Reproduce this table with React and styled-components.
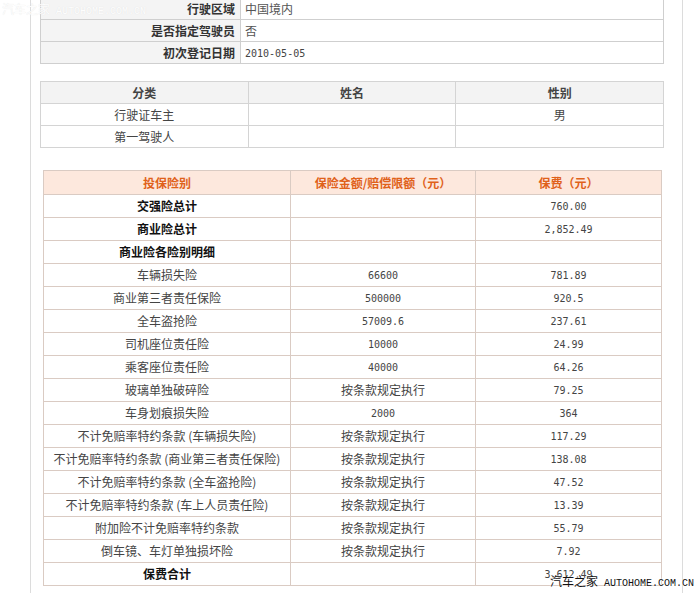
import React from "react";
import styled, { createGlobalStyle } from "styled-components";

const Global = createGlobalStyle`
  html, body { margin: 0; padding: 0; background: #fff; }
  body { font-family: "Noto Sans CJK SC", "Liberation Sans", sans-serif; font-size: 12px; color: #333; overflow: hidden; }
`;

const Page = styled.div`
  position: relative;
  width: 700px;
  height: 593px;
  overflow: hidden;
`;

const Frame = styled.div`
  margin: -3px 0 0 30px;
  width: 642px;
  border-left: 1px solid #dcdcdc;
  border-right: 1px solid #dcdcdc;
  padding: 0 0 20px 9px;
  display: flex;
  flex-direction: column;
`;

const Table = styled.table`
  border-collapse: collapse;
  width: ${(p) => p.$w}px;
  margin: ${(p) => p.$m || "0"};
  table-layout: fixed;
  border: 1px solid ${(p) => p.$line};
  td, th {
    border: 1px solid ${(p) => p.$line};
    padding: 0;
    height: ${(p) => p.$rh}px;
    vertical-align: middle;
    line-height: 14px;
  }
`;

const Label = styled.td`
  background: #f4f4f4;
  text-align: right;
  font-weight: bold;
  color: #333;
  padding-right: 5px !important;
`;

const Value = styled.td`
  text-align: left;
  color: #555;
  padding-left: 4px !important;
`;

const GrayHead = styled.th`
  background: #f3f3f3;
  font-weight: bold;
  color: #444;
  text-align: center;
`;

const Cell = styled.td`
  text-align: center;
  color: ${(p) => (p.$strong ? "#111" : "#444")};
  font-weight: ${(p) => (p.$strong ? "bold" : "normal")};
  white-space: nowrap;
`;

const OrangeHead = styled.th`
  background: #fde8dd;
  color: #e0611a;
  font-weight: bold;
  text-align: center;
  height: 23px !important;
`;

const Num = styled.span`
  font-family: "DejaVu Sans Mono", "Liberation Mono", monospace;
  font-size: 10px;
  color: #444;
`;

const MarkTop = styled.div`
  position: absolute;
  left: 2px;
  top: 2px;
  font-size: 12px;
  color: rgba(255, 255, 255, 0.95);
  text-shadow: 0 0 1px #dedede;
  white-space: nowrap;
  line-height: 14px;
`;

const MarkBottom = styled.div`
  position: absolute;
  right: 6px;
  bottom: 2px;
  font-size: 12px;
  color: #111;
  white-space: nowrap;
  line-height: 14px;
  text-shadow: 0 0 2px #fff, 0 0 2px #fff;
`;

const MarkLatin = styled.span`
  font-family: "Liberation Mono", "DejaVu Sans Mono", monospace;
  font-size: 10px;
  margin-left: 6px;
`;

const topRows = [
  ["行驶区域", "中国境内", false],
  ["是否指定驾驶员", "否", false],
  ["初次登记日期", "2010-05-05", true],
];

const rows = [
  ["交强险总计", "", "760.00", true],
  ["商业险总计", "", "2,852.49", true],
  ["商业险各险别明细", "", "", true],
  ["车辆损失险", "66600", "781.89"],
  ["商业第三者责任保险", "500000", "920.5"],
  ["全车盗抢险", "57009.6", "237.61"],
  ["司机座位责任险", "10000", "24.99"],
  ["乘客座位责任险", "40000", "64.26"],
  ["玻璃单独破碎险", "按条款规定执行", "79.25"],
  ["车身划痕损失险", "2000", "364"],
  ["不计免赔率特约条款 (车辆损失险)", "按条款规定执行", "117.29"],
  ["不计免赔率特约条款 (商业第三者责任保险)", "按条款规定执行", "138.08"],
  ["不计免赔率特约条款 (全车盗抢险)", "按条款规定执行", "47.52"],
  ["不计免赔率特约条款 (车上人员责任险)", "按条款规定执行", "13.39"],
  ["附加险不计免赔率特约条款", "按条款规定执行", "55.79"],
  ["倒车镜、车灯单独损坏险", "按条款规定执行", "7.92"],
  ["保费合计", "", "3,612.49", true],
];

const isNum = (s) => /^[0-9.,]+$/.test(s);

export default function App() {
  return (
    <Page>
      <Global />
      <Frame>
        <Table $w={624} $rh={21} $line="#cfcfcf">
          <colgroup>
            <col style={{ width: 200 }} />
            <col />
          </colgroup>
          <tbody>
            {topRows.map(([l, v, n]) => (
              <tr key={l}>
                <Label>{l}</Label>
                <Value>{n ? <Num>{v}</Num> : v}</Value>
              </tr>
            ))}
          </tbody>
        </Table>

        <Table $w={624} $rh={21} $line="#d4d4d4" $m="17px 0 0 0">
          <thead>
            <tr>
              <GrayHead>分类</GrayHead>
              <GrayHead>姓名</GrayHead>
              <GrayHead>性别</GrayHead>
            </tr>
          </thead>
          <tbody>
            <tr>
              <Cell>行驶证车主</Cell>
              <Cell></Cell>
              <Cell>男</Cell>
            </tr>
            <tr>
              <Cell>第一驾驶人</Cell>
              <Cell></Cell>
              <Cell></Cell>
            </tr>
          </tbody>
        </Table>

        <Table $w={619} $rh={22} $line="#dacbc3" $m="22px 0 0 3px">
          <colgroup>
            <col style={{ width: 247 }} />
            <col style={{ width: 185 }} />
            <col />
          </colgroup>
          <thead>
            <tr>
              <OrangeHead>投保险别</OrangeHead>
              <OrangeHead>保险金额/赔偿限额（元）</OrangeHead>
              <OrangeHead>保费（元）</OrangeHead>
            </tr>
          </thead>
          <tbody>
            {rows.map(([a, b, c, s]) => (
              <tr key={a}>
                <Cell $strong={s}>{a}</Cell>
                <Cell>{isNum(b) ? <Num>{b}</Num> : b}</Cell>
                <Cell>
                  <Num>{c}</Num>
                </Cell>
              </tr>
            ))}
          </tbody>
        </Table>
      </Frame>
      <MarkTop>
        汽车之家<MarkLatin>AUTOHOME.COM.CN</MarkLatin>
      </MarkTop>
      <MarkBottom>
        汽车之家<MarkLatin>AUTOHOME.COM.CN</MarkLatin>
      </MarkBottom>
    </Page>
  );
}
